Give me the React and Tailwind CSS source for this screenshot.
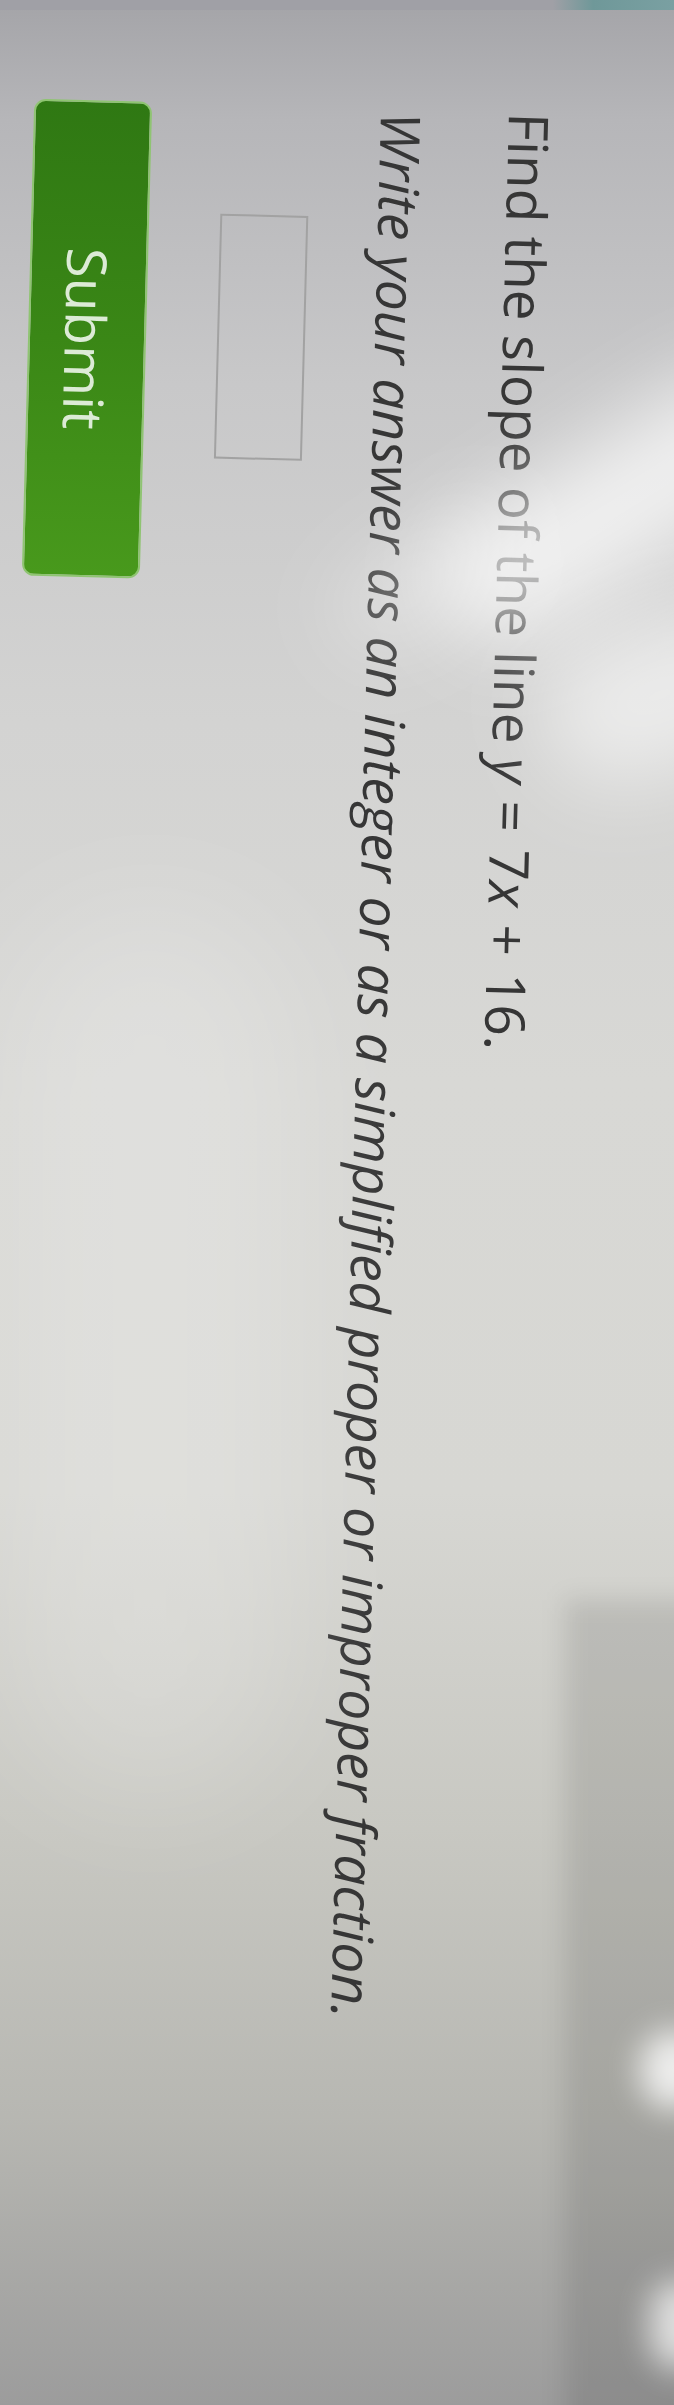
import React from 'react';

const ink = 'text-[#363636]';

const App = () => {
  return (
    <div className="relative w-[674px] h-[2405px] overflow-hidden bg-[linear-gradient(180deg,#a4a4a8_0%,#b6b6b9_5%,#c8c8c9_16%,#d3d3d2_30%,#d8d8d5_45%,#d7d7d3_62%,#c8c8c2_76%,#b7b7b2_88%,#9c9c9c_100%)]">
      {/* the screen, photographed sideways */}
      <div className="w-[2405px] h-[674px] origin-top-left translate-x-[674px] rotate-90">
        <div className="flex flex-col items-start w-full h-full origin-[112px_400px] rotate-[1.5deg] pt-[104px] pl-[106px] font-['Open_Sans',sans-serif]">
          <div className={`h-[80px] leading-[80px] text-[55px] whitespace-nowrap ${ink}`}>
            Find the slope of the line <i>y</i>{' '}
            <span className="mx-[3px]">=</span>{' '}7<i>x</i>{' '}
            <span className="mx-[3px]">+</span>{' '}16.
          </div>
          <div className={`mt-[48px] pl-[3px] h-[80px] leading-[80px] text-[55px] italic whitespace-nowrap ${ink}`}>
            Write your answer as an integer or as a simplified proper or improper fraction.
          </div>
          <input
            type="text"
            aria-label="answer"
            className="block mt-[51px] ml-[109px] w-[245px] h-[88px] border-2 border-[#a2a2a2] bg-transparent outline-none"
          />
          <button
            type="button"
            className="flex items-center justify-center mt-[71px] ml-[-1px] w-[477px] h-[118px] rounded-[12px] border-2 border-[#8fc472] bg-[linear-gradient(90deg,#2f7813_0%,#3a8716_50%,#48991c_100%)] text-[55px] leading-none text-[#dcebd6]"
          >
            Submit
          </button>
        </div>
      </div>

      {/* photo light: glare and shading */}
      <div className="pointer-events-none absolute left-0 top-0 w-[674px] h-[10px] bg-[linear-gradient(90deg,#a0a0a6_0%,#a0a0a6_82%,#6f9899_88%,#7aa0a2_100%)]" />
      <div className="pointer-events-none absolute left-[420px] top-[440px] w-[400px] h-[130px] -rotate-[32deg] rounded-full bg-white/70 blur-2xl" />
      <div className="pointer-events-none absolute left-[330px] top-[540px] w-[200px] h-[80px] -rotate-[32deg] rounded-full bg-white/35 blur-2xl" />
      <div className="pointer-events-none absolute left-[540px] top-[620px] w-[240px] h-[150px] -rotate-[20deg] rounded-full bg-white/55 blur-2xl" />
      <div className="pointer-events-none absolute left-[565px] top-[1600px] w-[140px] h-[900px] bg-black/10 blur-md" />
      <div className="pointer-events-none absolute left-[640px] top-[2030px] w-[70px] h-[80px] rounded-full bg-white/80 blur-lg" />
      <div className="pointer-events-none absolute left-[650px] top-[2280px] w-[60px] h-[90px] rounded-full bg-white/70 blur-lg" />
      <div className="pointer-events-none absolute left-0 top-[900px] w-[300px] h-[900px] rounded-full bg-white/20 blur-3xl" />
    </div>
  );
};

export default App;
